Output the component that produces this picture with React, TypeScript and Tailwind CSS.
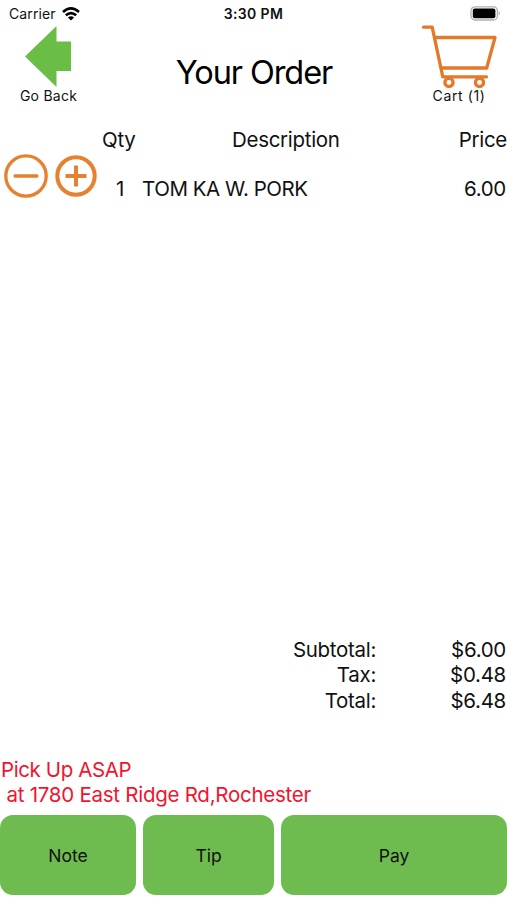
import type { ReactNode } from 'react';

function Wifi() {
  return (
    <svg width="18" height="14" viewBox="0 0 18 14" fill="none" stroke="#000" strokeWidth="2.6" className="shrink-0">
      <path d="M1 5 Q9 -2.1 17 5" />
      <path d="M3.8 8.3 Q9 3.8 14.2 8.3" />
      <path d="M5.9 10.4 Q9 7.9 12.1 10.4 L9 13.4 Z" fill="#000" stroke="none" />
    </svg>
  );
}

function Battery() {
  return (
    <svg width="31" height="15" viewBox="0 0 31 15" className="shrink-0">
      <rect x="1" y="0.8" width="26.4" height="13.2" rx="4" fill="#fff" stroke="#b0b0b0" strokeWidth="1.3" />
      <rect x="2.8" y="2.6" width="22.6" height="9.6" rx="2" fill="#000" />
      <path d="M28.7 5 Q31 7.4 28.7 9.8 Z" fill="#aaa" />
    </svg>
  );
}

function BackArrow() {
  return (
    <svg width="46" height="61" viewBox="0 0 46 61" className="mr-px shrink-0">
      <path d="M0 30.5 L31.5 0 V15.5 H46 V45 H31.5 V61 Z" fill="#6abd45" />
    </svg>
  );
}

function Cart() {
  return (
    <svg width="76" height="64" viewBox="0 0 76 64" fill="none" stroke="#e27a2c" strokeWidth="3.3" className="shrink-0">
      <path d="M2.5 2.2 H11.2 L21.8 51.8 H65.5" strokeLinecap="round" strokeLinejoin="round" />
      <path d="M13.8 12.5 H74 L65.7 43 H20" strokeLinejoin="round" />
      <circle cx="28" cy="57.5" r="4.1" />
      <circle cx="58.5" cy="57.5" r="4.1" />
    </svg>
  );
}

function Minus() {
  return (
    <svg width="44" height="44" viewBox="0 0 44 44" fill="none" stroke="#e5812f" strokeWidth="3.3">
      <circle cx="22" cy="22" r="20.2" />
      <path d="M11 22 H33" strokeLinecap="round" />
    </svg>
  );
}

function Plus() {
  return (
    <svg width="42" height="42" viewBox="0 0 42 42" fill="none" stroke="#e5812f" strokeWidth="4">
      <circle cx="21" cy="21" r="18.7" />
      <path d="M10.5 21 H31.5 M21 10.5 V31.5" />
    </svg>
  );
}

function Action({ children, className }: { children: ReactNode; className: string }) {
  return (
    <button className={`h-20 rounded-[13px] bg-[#6ebc4f] text-[17.5px] tracking-normal ${className}`}>
      {children}
    </button>
  );
}

export default function App() {
  return (
    <div className="flex h-[900px] w-[507px] flex-col overflow-hidden bg-white font-['Inter',sans-serif] text-[20.5px] leading-[25px] tracking-[-0.3px] text-[#111]">
      <div className="grid h-[25px] grid-cols-3 items-center pt-[2px] tracking-normal">
        <div className="flex items-center gap-[6px] pl-[9px] text-[14px] leading-none tracking-[0.1px]">
          <span>Carrier</span>
          <Wifi />
        </div>
        <div className="text-center text-[14px] font-semibold leading-none tracking-[0.35px]">3:30 PM</div>
        <div className="flex justify-end pr-[6px]">
          <Battery />
        </div>
      </div>

      <header className="flex h-[81px] justify-between">
        <button className="flex w-[97px] flex-col items-center pt-[1px] text-[14px] leading-[18px] tracking-[0.25px]">
          <BackArrow />
          <span>Go Back</span>
        </button>
        <h1 className="pt-[28px] text-[32.5px] leading-[40px] tracking-[-1.1px] text-black">Your Order</h1>
        <button className="flex w-[96px] flex-col items-center text-[14px] leading-[14px] tracking-[0.6px]">
          <Cart />
          <span>Cart (1)</span>
        </button>
      </header>

      <div className="flex h-[48px] items-start pt-[21px]">
        <span className="w-[130px] pl-[102px]">Qty</span>
        <span className="ml-[102px] flex-1">Description</span>
        <span>Price</span>
      </div>

      <div className="flex h-[60px] items-start">
        <button className="ml-1"><Minus /></button>
        <button className="ml-[7px] pt-px"><Plus /></button>
        <span className="ml-[19px] w-[26px] pt-[22px]">1</span>
        <span className="flex-1 pt-[22px] tracking-[-0.45px]">TOM KA W. PORK</span>
        <span className="pr-[1px] pt-[22px]">6.00</span>
      </div>

      <div className="mt-auto grid grid-cols-[376px_1fr] pr-[1px] text-right leading-[25.4px]">
        <span>Subtotal:</span><span>$6.00</span>
        <span>Tax:</span><span>$0.48</span>
        <span>Total:</span><span>$6.48</span>
      </div>

      <div className="mt-[45px] whitespace-pre pl-[1px] leading-[24.5px] text-[#f0142d]">
        <p className="tracking-[-0.4px]">Pick Up ASAP</p>
        <p className="tracking-[-0.26px]">{' at 1780 East Ridge Rd,Rochester'}</p>
      </div>

      <div className="mb-[5px] mt-[8px] flex">
        <Action className="w-[136px]">Note</Action>
        <Action className="ml-[7px] w-[131px]">Tip</Action>
        <Action className="ml-[7px] w-[226px]">Pay</Action>
      </div>
    </div>
  );
}
